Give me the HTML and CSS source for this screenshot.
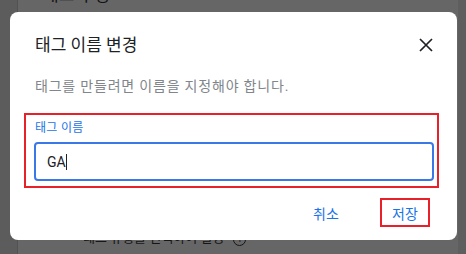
FILE: index.html
```html
<!DOCTYPE html>
<html lang="ko">
<head>
  <meta charset="UTF-8" />
  <meta name="viewport" content="width=device-width, initial-scale=1.0"/>
  <title>태그 이름 변경</title>
  <link rel="stylesheet" href="styles.css">
</head>
<body>

<div class="page">
  <div class="rail"></div>
  <main class="editor">
    <h2 class="section-title">태그 구성</h2>
    <p class="section-hint">태그 유형을 선택하여 설정 <span class="info">i</span></p>
  </main>
  <div class="side"></div>
</div>

<div class="dialog">
  <div class="dialog-head">
    <h1>태그 이름 변경</h1>
    <button class="close" aria-label="닫기">
      <svg width="14" height="14" viewBox="0 0 14 14">
        <path d="M1 1 L13 13 M13 1 L1 13" stroke="#202124" stroke-width="1.7" fill="none"/>
      </svg>
    </button>
  </div>
  <p class="hint">태그를 만들려면 이름을 지정해야 합니다.</p>

  <div class="field">
    <label for="tagName">태그 이름</label>
    <div class="input"><span>GA</span><span class="caret"></span></div>
  </div>

  <div class="actions">
    <button class="btn">취소</button>
    <button class="btn btn-save">저장</button>
  </div>
</div>

</body>
</html>
```

FILE: styles.css
```css
body {
  margin: 0;
  font-family: "Roboto", "Noto Sans CJK KR", sans-serif;
  background-color: #666666;
  overflow: hidden;
}

.page {
  display: flex;
  height: 254px;
}

.rail {
  width: 17px;
  background-color: #5c5c5c;
  border-right: 1px solid #525252;
}

.editor {
  flex: 1;
  padding-left: 25px;
}

.side {
  width: 8px;
  background-color: #5e5e5e;
}

.section-title {
  margin: -15px 0 0;
  font-size: 17px;
  line-height: 20px;
  font-weight: normal;
  color: #121212;
}

.section-hint {
  margin: 225px 0 0 40px;
  font-size: 13px;
  line-height: 16px;
  color: #161616;
}

.info {
  display: inline-block;
  width: 11px;
  height: 11px;
  border: 1.5px solid #161616;
  border-radius: 50%;
  font-size: 9px;
  line-height: 11px;
  text-align: center;
  margin-left: 6px;
}

.dialog {
  position: absolute;
  left: 10px;
  top: 12px;
  width: 447px;
  height: 228px;
  box-sizing: border-box;
  background: #ffffff;
  border-radius: 8px;
  padding: 21px 0 0 0;
}

.dialog-head {
  display: flex;
  align-items: center;
  justify-content: space-between;
  padding: 0 24px 0 25px;
}

.dialog-head h1 {
  margin: 0;
  font-size: 17px;
  line-height: 24px;
  font-weight: normal;
  color: #202124;
}

.close {
  border: none;
  background: none;
  padding: 0;
  width: 14px;
  height: 14px;
  display: flex;
}

.hint {
  margin: 19px 0 0 25px;
  font-size: 14px;
  line-height: 20px;
  letter-spacing: 0.8px;
  color: #80868b;
}

.field {
  margin: 17px 18px 0 14px;
  border: 2px solid #e8202a;
  padding: 4px 3px 5px 8px;
}

.field label {
  display: block;
  font-size: 12px;
  line-height: 18px;
  letter-spacing: 0.3px;
  color: #1a73e8;
  padding-left: 1px;
}

.input {
  margin-top: 5px;
  height: 39px;
  box-sizing: border-box;
  border: 2px solid #3b78e7;
  border-radius: 4px;
  display: flex;
  align-items: center;
  padding-left: 11px;
  font-size: 14px;
  color: #202124;
}

.caret {
  width: 1px;
  height: 16px;
  background: #202124;
}

.actions {
  display: flex;
  justify-content: flex-end;
  gap: 29px;
  margin: 10px 27px 0 0;
}

.btn {
  border: 2px solid transparent;
  background: none;
  width: 50px;
  height: 29px;
  padding: 0;
  font-family: inherit;
  font-size: 14px;
  color: #1a73e8;
}

.btn-save {
  border-color: #e8202a;
}
```
